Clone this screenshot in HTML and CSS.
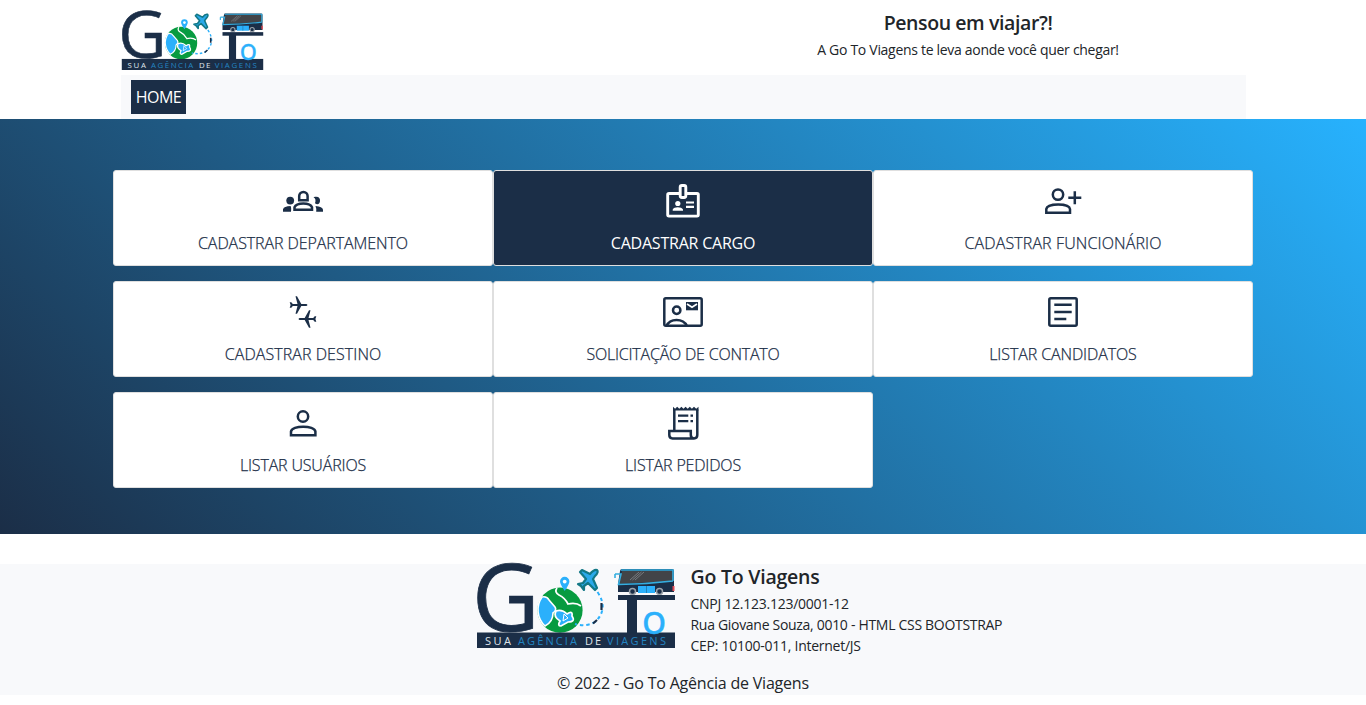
FILE: index.html
```html
<!DOCTYPE html>
<html lang="pt-br">
<head>
<meta charset="utf-8">
<title>Go To Viagens</title>
<link rel="stylesheet" href="styles.css">
</head>
<body>
<header class="header">
  <div class="header-top">
    <svg class="header-logo" viewBox="0 0 198 84">
      <text class="logo-g" x="-5" y="67">G</text>
      <g id="logo-art">
        <circle cx="83" cy="46.200" r="22.600" fill="#079b40"/>
        <path d="M65 33Q70 32 72 36L78 43Q80 46 76 49Q76 58 68 62A22.300 22.300 0 0 1 65 33Z" fill="#2bb0fb" stroke="#fff" stroke-width="1.600"/>
        <path d="M80 24Q77 28 82 31Q88 34 91 40Q99 38 104 42" fill="none" stroke="#fff" stroke-width="1.800"/>
        <path d="M79 47Q85 45 90 50Q96 46 95 52Q99 58 91 58L84 62Q80 62 83 57Q76 53 79 47Z" fill="#2bb0fb" stroke="#fff" stroke-width="1.700"/>
        <path d="M87 50l4 4-5 3z" fill="#2bb0fb" stroke="#fff" stroke-width="1"/>
        <path d="M87.700 27Q83 20 83 17.500a4.700 4.700 0 0 1 9.400 0Q92.400 20 87.700 27Z" fill="#2bb0fb"/>
        <circle cx="87.700" cy="17.600" r="1.900" fill="#fff"/>
        <path d="M120.500 28Q132 45 118 58Q109 63 98 60" fill="none" stroke="#2bb0fb" stroke-width="2" stroke-dasharray="3.500 3"/>
        <path d="M124.500 39V46M120 56L116 59.500" fill="none" stroke="#1b2e47" stroke-width="2.200"/>
        <path d="M120 6Q122 8 118 12L116 15L120 24L118 26L111 19L107 22V26L104 22L101 20L106 19L109 15L103 8L105 6L113 10Q117 5 120 6Z" fill="#2aa9ea" stroke="#137886" stroke-width="2.200" stroke-linejoin="round"/>
        <path d="M144 5H195Q197 5 197 7V28H141V20L143 7Z" fill="#1b2e47"/>
        <path d="M145 7H196V17L142 20Z" fill="#424448"/>
        <path d="M138 10V14M138 10H144L141.500 20.500Q170 20 196 17M144 6H196V17" fill="none" stroke="#35aee0" stroke-width="1.600"/>
        <path d="M153 16L162 8M158 16L167 8M155.500 16L164.500 8" stroke="#777b80" stroke-width="1"/>
        <path d="M161 22H178V29H161Z" fill="#2bb0fb"/>
        <path d="M169.500 22V29" stroke="#1b6d9d" stroke-width=".7"/>
        <path d="M195.500 22h2v5h-2z" fill="#e24b55"/>
        <g fill="#1b2e47" stroke="#9da4ab" stroke-width="1.500"><circle cx="155.500" cy="27.500" r="3"/><circle cx="182.500" cy="27.500" r="3"/></g>
        <rect x="141" y="31" width="57" height="5" fill="#1b2e47"/>
        <rect x="150" y="35" width="10" height="34" fill="#1b2e47"/>
        <rect y="68.500" width="198" height="15.500" fill="#1b2e47"/>
      </g>
      <text class="logo-o" x="164.700" y="69.500">o</text>
      <g class="logo-tag">
        <text x="8" y="81" textLength="26" fill="#dfe4ea">SUA</text>
        <text x="41" y="81" textLength="59" fill="#2384c1">AGÊNCIA</text>
        <text x="108" y="81" textLength="16" fill="#dfe4ea">DE</text>
        <text x="130" y="81" textLength="59" fill="#2384c1">VIAGENS</text>
      </g>
    </svg>
    <div class="slogan">
      <h5 class="title"><span class="w-slogan">Pensou em viajar?!</span></h5>
      <p class="small"><span class="w-sub">A Go To Viagens te leva aonde você quer chegar!</span></p>
    </div>
  </div>
  <nav class="nav"><a class="nav-link">HOME</a></nav>
</header>

<main class="panel">
  <div class="cards">
    <a class="card">
      <svg class="icon" viewBox="0 0 40 40"><g transform="translate(0 .8)"><path class="line" d="M16.200 18.500V14.300a4.200 4.200 0 0 1 8.400 0V18.500ZM11.500 28V25.500C13.500 20.500 27 20.500 29 25.500V28Z"/><circle cx="7.200" cy="18.800" r="3.900"/><path d="M0 30V27.500Q1 24.500 7.500 24.300Q8.500 25.500 8 30ZM30.500 15.500C35 14 37.500 16 37 19.500S34 23 32 21.500Q33.500 17 30.500 15.500ZM32.500 24.300Q39.500 25 40 28V30H33.200Q33.500 26.500 32.500 24.300Z"/></g></svg>
      <span class="label w1">CADASTRAR DEPARTAMENTO</span>
    </a>
    <a class="card active">
      <svg class="icon" viewBox="0 0 40 40"><g transform="translate(0 .8)"><path class="line thick" d="M16 11.700H6Q4.700 11.700 4.700 13V33Q4.700 34.300 6 34.300H34Q35.300 34.300 35.300 33V13Q35.300 11.700 34 11.700H24"/><rect class="line thick" x="17.200" y="3.700" width="5.600" height="12" rx="1.700"/><circle cx="14.800" cy="21.700" r="2.600"/><path d="M9.700 29V27.700C11 24.700 18.500 24.700 20 27.700V29ZM23 19.700h8v2.100h-8zM23 24h8v2.100h-8z"/></g></svg>
      <span class="label w2">CADASTRAR CARGO</span>
    </a>
    <a class="card">
      <svg class="icon" viewBox="0 0 40 40"><circle class="line" cx="15" cy="13.600" r="5.200"/><path class="line" d="M3.300 31.700V28C4 22 26.400 22 27 28V31.700ZM25.300 16.700H38.300M31.800 10.300V23.300"/></svg>
      <span class="label w3">CADASTRAR FUNCIONÁRIO</span>
    </a>
    <a class="card">
      <svg class="icon" viewBox="0 0 40 40"><path id="jet" d="M24.400 13Q24.400 11.900 23 11.900H18.300L14 4.300H12.500L14.500 11.900H9.800L8.300 10.200H6.700L7.600 13L6.700 15.800H8.300L9.800 14.100H14.500L12.500 21.700H14L18.300 14.100H23Q24.400 14.100 24.400 13Z"/><use href="#jet" transform="rotate(180 20 20)"/></svg>
      <span class="label w4">CADASTRAR DESTINO</span>
    </a>
    <a class="card">
      <svg class="icon" viewBox="0 0 40 40"><rect class="line" x="1.300" y="6.300" width="37.400" height="27.400" rx="1.500"/><circle class="line" cx="13.700" cy="18.300" r="3.700"/><path class="line" d="M3.500 34C7 26 20 26 24 34"/><path d="M23 10H35V18.300H23Z"/><path d="M24 12L29 15.200L34 12" fill="none" stroke="#fff" stroke-width="1.700"/></svg>
      <span class="label w5">SOLICITAÇÃO DE CONTATO</span>
    </a>
    <a class="card">
      <svg class="icon" viewBox="0 0 40 40"><rect class="line" x="6.300" y="6.300" width="27.400" height="27.400" rx="1.500"/><path class="line" d="M11.300 12.700H28.700M11.300 20H28.700M11.300 27H23.300"/></svg>
      <span class="label w6">LISTAR CANDIDATOS</span>
    </a>
    <a class="card">
      <svg class="icon" viewBox="0 0 40 40"><circle class="line" cx="20" cy="13.500" r="5.200"/><path class="line" d="M8 32.200V28.500C8.700 22 31.700 22 32.400 28.500V32.200Z"/></svg>
      <span class="label w7">LISTAR USUÁRIOS</span>
    </a>
    <a class="card">
      <svg class="icon" viewBox="0 0 40 40"><path class="line" d="M11.300 27V6.500M34.300 6.500V32Q34.300 35.400 31 35.400H9.500Q6.300 35.400 6.300 32V28H27.800V32Q27.800 35.400 31 35.400"/><path d="M10 3.800L12.100 5.800L14.200 3.800L16.300 5.800L18.400 3.800L20.500 5.800L22.600 3.800L24.700 5.800L26.800 3.800L28.900 5.800L31 3.800L33.200 5.800L35.500 3.800V7.500H10ZM15 11.500h10.300v2.300h-10.300zM15 17h10.300v2.300h-10.300zM27.500 11.500h2.500v2.300h-2.500zM27.500 17h2.500v2.300h-2.500z"/></svg>
      <span class="label w8">LISTAR PEDIDOS</span>
    </a>
  </div>
</main>

<footer class="footer">
  <div class="footer-main">
    <svg class="footer-logo" viewBox="0 0 198 84">
      <text class="logo-g" x="-5" y="67">G</text>
      <use href="#logo-art"/>
      <text class="logo-o" x="164.700" y="69.500">o</text>
      <g class="logo-tag">
        <text x="8" y="81" textLength="26" fill="#dfe4ea">SUA</text>
        <text x="41" y="81" textLength="59" fill="#2384c1">AGÊNCIA</text>
        <text x="108" y="81" textLength="16" fill="#dfe4ea">DE</text>
        <text x="130" y="81" textLength="59" fill="#2384c1">VIAGENS</text>
      </g>
    </svg>
    <div class="address">
      <h5 class="title"><span class="w-name">Go To Viagens</span></h5>
      <p class="small"><span class="w-a1">CNPJ 12.123.123/0001-12</span></p>
      <p class="small"><span class="w-a2">Rua Giovane Souza, 0010 - HTML CSS BOOTSTRAP</span></p>
      <p class="small"><span class="w-a3">CEP: 10100-011, Internet/JS</span></p>
    </div>
  </div>
  <p class="copyright"><span class="w-copy">© 2022 - Go To Agência de Viagens</span></p>
</footer>
</body>
</html>
```
FILE: styles.css
```css
* { box-sizing: border-box; }
body { margin: 0; background: #fff; color: #212529; font: 16px/24px "Segoe UI", "Open Sans", "Noto Sans", sans-serif; }
h5, p { margin: 0; }
.logo-g { font: 93px "Open Sans", sans-serif; fill: #1b2e47; stroke: #1b2e47; stroke-width: .8px; }
.logo-o { font: 41px "Open Sans", sans-serif; fill: #2bb0fb; stroke: #2bb0fb; stroke-width: .4px; }
.logo-tag { font: 11px "Open Sans", sans-serif; }

.header { width: 1125px; margin-left: 121px; }
.header-top { display: flex; height: 75px; padding-top: 10px; }
.header-logo { width: 143px; height: 60px; overflow: visible; }
.slogan { width: 556px; margin-left: auto; padding-top: 1px; text-align: center; }
.title { font-size: 19.5px; line-height: 24px; font-weight: 600; }
.small { font-size: 14px; line-height: 21px; }
.slogan .title { margin-bottom: 4px; }
.nav { display: flex; height: 44px; padding: 5px 10px; background: #f8f9fb; }
.nav-link { width: 55px; height: 34px; line-height: 34px; text-align: center; background: #1b2e47; color: #fff; letter-spacing: -.5px; }

.panel { height: 415px; padding: 51px 113px 0; background: linear-gradient(45deg, #1b2e47, #27b2fe); }
.cards { display: grid; grid-template-columns: repeat(3, 380px); grid-auto-rows: 96px; row-gap: 15px; }
.card { display: flex; flex-direction: column; align-items: center; padding-top: 10px; border: 1px solid #dfdfdf; border-radius: 3px; background: #fff; color: #1b2e47; }
.card.active { background: #1b2e47; color: #fff; }
.icon { width: 40px; height: 40px; fill: currentColor; }
.line { fill: none; stroke: currentColor; stroke-width: 2.5; }
.thick { stroke-width: 2.9; }
.label { margin-top: 10px; font-weight: 300; white-space: nowrap; -webkit-text-stroke: .25px currentColor; }
.active .label { font-weight: 400; -webkit-text-stroke: 0; }
.w1 { letter-spacing: -.08px; }
.w2 { letter-spacing: -.22px; }
.w3 { letter-spacing: .12px; }
.w4 { letter-spacing: .07px; }
.w5 { letter-spacing: -.21px; }
.w6 { letter-spacing: -.11px; }
.w7 { letter-spacing: -.16px; }
.w8 { letter-spacing: -.18px; }

.footer { height: 131px; margin-top: 30px; background: #f8f9fb; }
.footer-main { display: flex; height: 107px; padding-left: 476px; }
.footer-logo { width: 200px; height: 84px; overflow: visible; }
.address { padding: 1px 0 0 14.5px; white-space: nowrap; }
.address .title { margin-bottom: 4px; }
.copyright { text-align: center; }
.w-slogan { letter-spacing: -.4px; }
.w-name { letter-spacing: -.22px; }
.w-sub, .w-a2 { letter-spacing: -.3px; }
.w-a1, .w-a3 { letter-spacing: -.26px; }
.w-copy { letter-spacing: -.2px; }
```
